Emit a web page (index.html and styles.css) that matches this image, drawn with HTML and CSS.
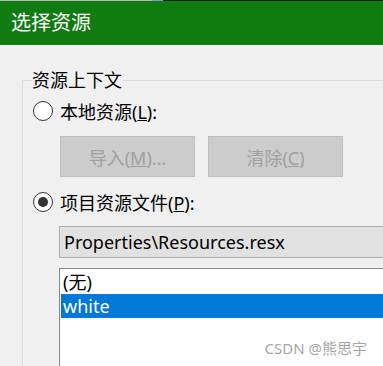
FILE: index.html
```html
<!DOCTYPE html>
<html lang="zh-CN">
<head>
  <meta charset="UTF-8">
  <meta name="viewport" content="width=device-width, initial-scale=1.0">
  <title>选择资源</title>
  <link rel="stylesheet" href="styles.css">
</head>
<body>
  <div class="top-strip"></div>
  <div class="title-bar">选择资源</div>

  <div class="dialog">
    <fieldset class="group">
      <legend>资源上下文</legend>

      <div class="radio-row">
        <span class="radio"></span>
        <span class="radio-label">本地资源(<u>L</u>):</span>
      </div>
      <div class="button-row">
        <button class="btn" disabled>导入(<u>M</u>)...</button>
        <button class="btn" disabled>清除(<u>C</u>)</button>
      </div>

      <div class="radio-row second">
        <span class="radio checked"></span>
        <span class="radio-label">项目资源文件(<u>P</u>):</span>
      </div>
      <div class="combo">Properties\Resources.resx</div>

      <div class="listbox">
        <div class="list-item">(无)</div>
        <div class="list-item selected">white</div>
      </div>
    </fieldset>
  </div>

  <div class="watermark">CSDN @熊思宇</div>
</body>
</html>
```

FILE: styles.css
```css
html, body {
  overflow: hidden;
}
body {
  margin: 0;
  width: 383px;
  height: 366px;
  background-color: #f0f0f0;
  font-family: "Noto Sans", "Noto Sans CJK SC", sans-serif;
  color: #000;
  position: relative;
}
.top-strip {
  height: 1px;
  background: linear-gradient(to right, #b9b9b9 0, #b9b9b9 152px, #7f9cc4 152px, #7f9cc4 163px, #1f1f1f 163px);
}
.title-bar {
  height: 44px;
  background-color: #107c10;
  color: #fff;
  font-size: 20px;
  line-height: 44px;
  padding-left: 11px;
}
.dialog {
  padding-left: 22px;
  padding-top: 25px;
}
.group {
  margin: 0;
  padding: 0 0 0 10px;
  border: 1px solid #dcdcdc;
  border-right: none;
  border-bottom: none;
  min-width: 0;
}
.group legend {
  padding: 0 1px 0 0;
  margin-left: -1px;
  font-size: 18px;
  line-height: 20px;
}
.radio-row {
  display: flex;
  align-items: center;
  height: 24px;
  margin-top: 9px;
}
.radio-row.second {
  margin-top: 13px;
}
.radio {
  width: 18px;
  height: 18px;
  border: 1px solid #333;
  border-radius: 50%;
  background-color: #fff;
  display: flex;
  align-items: center;
  justify-content: center;
  box-sizing: content-box;
}
.radio.checked::after {
  content: "";
  width: 10px;
  height: 10px;
  border-radius: 50%;
  background-color: #333;
}
.radio-label {
  margin-left: 7px;
  font-size: 18px;
}
.button-row {
  display: flex;
  gap: 13px;
  margin-top: 13px;
  padding-left: 27px;
}
.btn {
  width: 135px;
  height: 41px;
  background-color: #cccccc;
  border: 1px solid #bfbfbf;
  color: #a0a0a0;
  font-family: inherit;
  font-size: 18px;
  padding: 0;
}
.combo {
  margin: 12px 0 0 26px;
  height: 30px;
  line-height: 30px;
  border: 1px solid #adadad;
  border-right: none;
  background-color: #e1e1e1;
  padding-left: 4px;
  font-size: 18px;
  white-space: nowrap;
}
.listbox {
  margin: 10px 0 0 26px;
  border: 1px solid #828790;
  border-right: none;
  border-bottom: none;
  background-color: #fff;
  padding: 1px 0 0 1px;
  height: 96px;
}
.list-item {
  height: 24px;
  line-height: 24px;
  padding-left: 2px;
  font-size: 18px;
}
.list-item.selected {
  background-color: #0078d7;
  color: #fff;
}
.watermark {
  position: absolute;
  right: 16px;
  bottom: 8px;
  font-size: 15px;
  color: #a6a6a6;
}
```
